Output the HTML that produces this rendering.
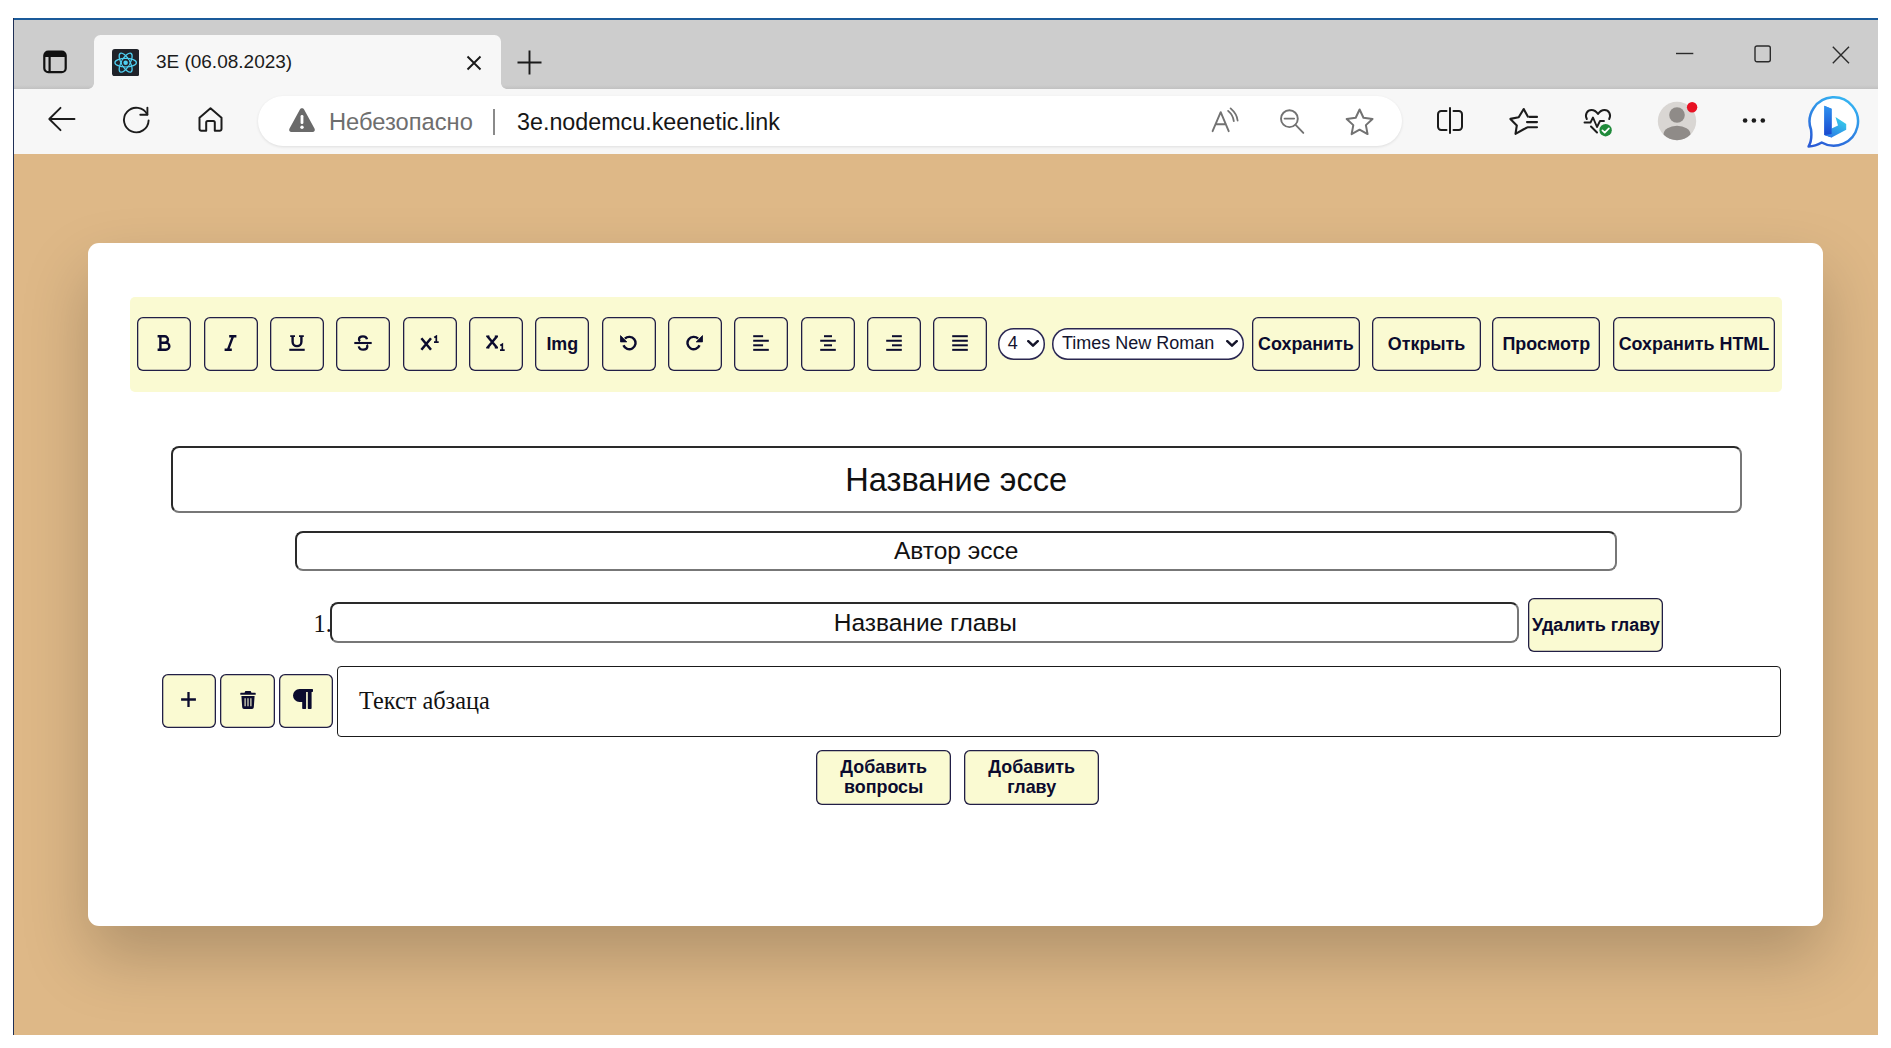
<!DOCTYPE html>
<html lang="ru">
<head>
<meta charset="utf-8">
<title>3E (06.08.2023)</title>
<style>
*{box-sizing:border-box;margin:0;padding:0}
html,body{width:1891px;height:1048px;overflow:hidden;background:#fff;font-family:"Liberation Sans",sans-serif;}
#win{position:absolute;left:13px;top:18px;width:1865px;height:1017px;overflow:hidden;background:#deb887;border-left:1px solid #1f2f55;}
#win:before{content:"";position:absolute;left:0;top:0;width:100%;height:2px;background:#1a5a9a;z-index:50}
.abs{position:absolute}
/* ---------- browser chrome ---------- */
#tabstrip{position:absolute;left:0;top:0;width:100%;height:70.7px;background:linear-gradient(#cdcdcd 67px,#c2c2c2 70.7px)}
#tab{position:absolute;left:79.6px;top:16.6px;width:407.5px;height:56px;background:#f7f7f7;border-radius:6.5px 6.5px 0 0}
#tab:before,#tab:after{content:"";position:absolute;bottom:1.9px;width:6px;height:6px;background:radial-gradient(circle at 0 0,rgba(0,0,0,0) 5.5px,#f7f7f7 6.2px)}
#tab:before{left:-6px}
#tab:after{right:-6px;transform:scaleX(-1)}
#navbar{position:absolute;left:0;top:70.5px;width:100%;height:65px;background:#f7f7f7}
#pill{position:absolute;left:243.5px;top:7.8px;width:1144.5px;height:50px;border-radius:25px;background:#fff;box-shadow:0 1px 3px rgba(0,0,0,.10)}
.ctext{position:absolute;white-space:nowrap;transform-origin:0 50%}
/* ---------- page ---------- */
#page{position:absolute;left:0;top:135.5px;width:1864px;height:881.5px;background:#deb887;overflow:hidden}
#card{position:absolute;left:74.3px;top:89.1px;width:1734.5px;height:683.9px;background:#fff;border-radius:11px;box-shadow:0 31px 66px rgba(0,0,0,.21)}
#tb{position:absolute;left:41.5px;top:54.9px;width:1652.6px;height:94.2px;background:#fafad2;border-radius:5px}
.b{position:absolute;top:19.7px;height:54px;width:54px;border:none;box-shadow:inset 0 0 0 1.3px #211e46;border-radius:6px;background:#fafad2;color:#0b0b2e;display:flex;align-items:center;justify-content:center;font-weight:700;font-size:17.9px;white-space:nowrap}
.b svg{display:block}
.ic{padding-bottom:1.8px}
.sel{position:absolute;top:30.8px;height:31.4px;border:none;box-shadow:inset 0 0 0 1.500px #2a2750;border-radius:15.600px;background:#fff;color:#14142e;font-size:18px;line-height:30.3px;padding-left:10px}
.inp{position:absolute;border:2px solid #2a2a2a;border-right-color:#777;border-bottom-color:#777;border-radius:8px;background:#fff;text-align:center;color:#111;white-space:nowrap}
</style>
</head>
<body>
<div id="win">
  <div id="tabstrip">
    <!-- tab actions icon -->
    <svg class="abs" style="left:28.5px;top:32px" width="24" height="24" viewBox="0 0 24 24"><rect x="1.3" y="1.6" width="21.4" height="20.6" rx="4" fill="none" stroke="#111" stroke-width="2.2"/><path d="M1.5 5.5a4 4 0 0 1 4-4h13a4 4 0 0 1 4 4v1.6h-21z" fill="#111"/><path d="M6.6 6v16" stroke="#111" stroke-width="2.2"/></svg>
    <div id="tab">
      <!-- favicon -->
      <svg class="abs" style="left:18.300px;top:14px" width="27.300" height="27.300" viewBox="0 0 28 28"><rect width="28" height="28" rx="3" fill="#20232a"/><g fill="none" stroke="#4fd0f2" stroke-width="1.300"><ellipse cx="14" cy="14" rx="11" ry="4.3"/><ellipse cx="14" cy="14" rx="11" ry="4.3" transform="rotate(60 14 14)"/><ellipse cx="14" cy="14" rx="11" ry="4.3" transform="rotate(120 14 14)"/></g><circle cx="14" cy="14" r="3.700" fill="#20232a"/><circle cx="14" cy="14" r="2.300" fill="#4fd0f2"/></svg>
      <div class="ctext" style="left:62.300px;top:16.600px;font-size:19px;line-height:22px;color:#1b1b1b">3E (06.08.2023)</div>
      <svg class="abs" style="left:372px;top:20px" width="16" height="16" viewBox="0 0 16 16"><path d="M1.5 1.5l13 13M14.500 1.5l-13 13" stroke="#1a1a1a" stroke-width="1.9" fill="none"/></svg>
    </div>
    <!-- new tab plus -->
    <svg class="abs" style="left:503px;top:31.500px" width="25" height="25" viewBox="0 0 25 25"><path d="M12.5 0.500v24M0.500 12.5h24" stroke="#1a1a1a" stroke-width="1.9" fill="none"/></svg>
    <!-- window controls -->
    <svg class="abs" style="left:1662px;top:33.800px" width="18" height="3" viewBox="0 0 18 3"><path d="M0 1.500h17.300" stroke="#2b2b2b" stroke-width="1.400"/></svg>
    <svg class="abs" style="left:1739.700px;top:27.200px" width="18" height="18" viewBox="0 0 18 18"><rect x="1" y="1" width="15.300" height="15.800" rx="2" fill="none" stroke="#2b2b2b" stroke-width="1.400"/></svg>
    <svg class="abs" style="left:1817.500px;top:27.800px" width="18" height="18" viewBox="0 0 18 18"><path d="M0.800 0.800l16.200 16.400M17 0.800l-16.200 16.400" stroke="#2b2b2b" stroke-width="1.400" fill="none"/></svg>
  </div>
  <div id="navbar">
    <!-- back -->
    <svg class="abs" style="left:33px;top:17.800px" width="29" height="26" viewBox="0 0 29 26"><path d="M27.500 13H2.500M13.500 1.800L2.300 13l11.200 11.200" fill="none" stroke="#1c1c1c" stroke-width="1.9" stroke-linecap="round" stroke-linejoin="round"/></svg>
    <!-- reload -->
    <svg class="abs" style="left:107px;top:16px" width="30" height="30" viewBox="0 0 30 30"><path d="M26.300 9.500A12.300 12.300 0 1 0 27.600 15.500" fill="none" stroke="#1c1c1c" stroke-width="1.900" stroke-linecap="round"/><path d="M26.400 2.600v7.100h-7.100" fill="none" stroke="#1c1c1c" stroke-width="1.900" stroke-linecap="round" stroke-linejoin="round"/></svg>
    <!-- home -->
    <svg class="abs" style="left:183px;top:17px" width="27" height="27" viewBox="0 0 27 27"><path d="M2.500 11.800L13.500 2.200l11 9.600V23a1.800 1.800 0 0 1-1.800 1.800h-4.900v-8.300a1.500 1.500 0 0 0-1.500-1.500h-5.600a1.500 1.500 0 0 0-1.500 1.500v8.300H4.300A1.800 1.800 0 0 1 2.500 23z" fill="none" stroke="#1c1c1c" stroke-width="2" stroke-linejoin="round"/></svg>
    <div id="pill">
      <!-- warning -->
      <svg class="abs" style="left:30px;top:11px" width="28" height="26" viewBox="0 0 28 26"><path d="M14 1.200c.9 0 1.700.5 2.100 1.300l10.500 19.300c.8 1.500-.3 3.300-2 3.300H3.400c-1.700 0-2.800-1.800-2-3.300L11.900 2.500c.4-.8 1.200-1.300 2.100-1.300z" fill="#6a6a6a"/><rect x="12.600" y="8" width="2.800" height="9" rx="1.200" fill="#fff"/><circle cx="14" cy="20.300" r="1.700" fill="#fff"/></svg>
      <div class="ctext" style="left:71.500px;top:12.200px;font-size:23.700px;line-height:28px;color:#6e6e6e">Небезопасно</div>
      <div class="abs" style="left:235.500px;top:13px;width:1.500px;height:25.500px;background:#8a8a8a"></div>
      <div class="ctext" style="left:259.500px;top:12.100px;font-size:23.300px;line-height:28px;color:#161616">3e.nodemcu.keenetic.link</div>
      <!-- read aloud -->
      <svg class="abs" style="left:952.500px;top:9.700px" width="30" height="30" viewBox="0 0 30 30"><path d="M2.600 25.200L10.700 6.200L18.700 25.200M5.600 18.300H15.900" fill="none" stroke="#727272" stroke-width="1.900" stroke-linecap="round" stroke-linejoin="round"/><path d="M18.100 4.900Q23 9 23.800 15.100M20.600 2.400Q27 8 27.600 14.500" fill="none" stroke="#727272" stroke-width="1.800" stroke-linecap="round"/></svg>
      <!-- zoom out -->
      <svg class="abs" style="left:1020.500px;top:10.700px" width="28" height="28" viewBox="0 0 28 28"><circle cx="11.400" cy="11.700" r="8.400" fill="none" stroke="#727272" stroke-width="1.900"/><path d="M6.600 11.600H16.100M17.600 17.900L25.300 25.900" fill="none" stroke="#727272" stroke-width="1.900" stroke-linecap="round"/></svg>
      <!-- star -->
      <svg class="abs" style="left:1086.500px;top:9.700px" width="32" height="32" viewBox="0 0 32 32"><path d="M15.60 3.50L19.48 11.76L28.53 12.90L21.88 19.14L23.59 28.10L15.60 23.70L7.61 28.10L9.32 19.14L2.67 12.90L11.72 11.76Z" fill="none" stroke="#727272" stroke-width="2" stroke-linejoin="round"/></svg>
    </div>
    <!-- split screen -->
    <svg class="abs" style="left:1421.800px;top:18.800px" width="28" height="27" viewBox="0 0 28 27"><path d="M10.500 4H5.200A3.200 3.200 0 0 0 2 7.200v12.600A3.200 3.200 0 0 0 5.200 23h5.300M17.500 4h5.300A3.200 3.200 0 0 1 26 7.200v12.600a3.200 3.200 0 0 1-3.200 3.200h-5.300M14 1v25" fill="none" stroke="#1c1c1c" stroke-width="2" stroke-linecap="round"/></svg>
    <!-- favorites -->
    <svg class="abs" style="left:1494px;top:17.500px" width="32" height="30" viewBox="0 0 32 30"><path d="M18.500 21.800L15.700 23.300L7.500 27.800L8.800 19.500L2.400 12.900L10.700 11.300L15.700 3L19.800 10.600" fill="none" stroke="#1c1c1c" stroke-width="2.100" stroke-linejoin="round" stroke-linecap="round"/><path d="M21.500 10.900H29M19 16.100H29M19.600 21.200H29" stroke="#1c1c1c" stroke-width="2.100" stroke-linecap="round"/></svg>
    <!-- health heart -->
    <svg class="abs" style="left:1569.200px;top:18.800px" width="32" height="30" viewBox="0 0 32 30"><path d="M3.800 12C1.500 7.500 4.300 3 8.500 3c3 0 5 1.800 6.500 4 1.500-2.200 3.500-4 6.500-4 4.200 0 7 4.500 4.700 9M8 19.500l6 6" fill="none" stroke="#1c1c1c" stroke-width="2" stroke-linecap="round" stroke-linejoin="round"/><path d="M1.500 15.500h6l2.500-5 4 9.500 3-6h4" fill="none" stroke="#1c1c1c" stroke-width="1.900" stroke-linecap="round" stroke-linejoin="round"/><circle cx="22.600" cy="23.200" r="6.200" fill="#1f8a3a"/><path d="M19.400 23.400l2.300 2.300 4.200-4.400" fill="none" stroke="#fff" stroke-width="1.700" stroke-linecap="round" stroke-linejoin="round"/></svg>
    <!-- profile -->
    <svg class="abs" style="left:1641.500px;top:10.700px" width="46" height="46" viewBox="0 0 46 46"><defs><clipPath id="pc"><circle cx="21" cy="22" r="19.200"/></clipPath></defs><circle cx="21" cy="22" r="19.200" fill="#d9d6d3"/><g clip-path="url(#pc)" fill="#8f8b88"><circle cx="21" cy="16" r="7.800"/><ellipse cx="21" cy="35.500" rx="13.500" ry="8.800"/></g><circle cx="36.100" cy="8.200" r="5.200" fill="#e81123"/></svg>
    <!-- dots -->
    <svg class="abs" style="left:1728px;top:28.400px" width="26" height="7" viewBox="0 0 26 7"><circle cx="3.100" cy="3.500" r="2.300" fill="#1c1c1c"/><circle cx="11.900" cy="3.500" r="2.300" fill="#1c1c1c"/><circle cx="20.800" cy="3.500" r="2.300" fill="#1c1c1c"/></svg>
    <!-- bing -->
    <svg class="abs" style="left:1793.200px;top:7.500px" width="54" height="54" viewBox="0 0 54 54"><defs><linearGradient id="bg1" x1="0.700" y1="0" x2="0.200" y2="1"><stop offset="0" stop-color="#35b4f2"/><stop offset="1" stop-color="#2a5bd6"/></linearGradient><linearGradient id="bg2" x1="0" y1="0" x2="0" y2="1"><stop offset="0" stop-color="#2f93f0"/><stop offset="1" stop-color="#1a49cf"/></linearGradient><linearGradient id="bg3" x1="0.800" y1="0" x2="0.200" y2="1"><stop offset="0" stop-color="#38d2ea"/><stop offset="1" stop-color="#2a78e6"/></linearGradient></defs><path d="M4.060 33.780A24.200 24.200 0 1 1 14.700 46.460Q8.500 50.300 1.600 50.400Q5.300 44.500 4.060 33.780Z" fill="#fff" stroke="url(#bg1)" stroke-width="2.500" stroke-linejoin="round"/><path d="M17.300 9.700L24.600 12.800V41.400L17.300 38.900Z" fill="url(#bg2)"/><path d="M28.500 21.100L39.200 28.100V33.800L24.600 41.400L17.300 38.900L24.600 32.500L31 29.600Z" fill="url(#bg3)"/><path d="M17.300 9.700L24.600 12.800V38L17.300 38.900Z" fill="url(#bg2)"/></svg>
  </div>
  <div id="page">
    <div id="card">
      <div id="tb">
        <div class="b ic" style="left:7.40px"><svg width="14" height="16" viewBox="0 0 14 16"><path d="M0.600 1.300h7.100a3.250 3.250 0 0 1 0 6.500H3.600M3.600 7.800h5.300a3.450 3.450 0 0 1 0 6.900H0.600M3.400 1.300v13.400" fill="none" stroke="#0b0b2e" stroke-width="2.400" stroke-linejoin="round"/></svg></div>
        <div class="b ic" style="left:73.75px"><svg width="13" height="16" viewBox="0 0 13 16"><path d="M5.200 1.300h7.200M0.600 14.700h7.200M9 1.300L4 14.700" fill="none" stroke="#0b0b2e" stroke-width="2.400"/></svg></div>
        <div class="b ic" style="left:140.10px"><svg width="16" height="16" viewBox="0 0 16 16"><path d="M3.600 0.900v5.800a4.400 4.400 0 0 0 8.800 0V0.900" fill="none" stroke="#0b0b2e" stroke-width="2.400"/><path d="M1.200 1.100h4.800M10 1.100h4.800" stroke="#0b0b2e" stroke-width="1.900"/><path d="M0.300 14.800h15.400" stroke="#0b0b2e" stroke-width="2.100"/></svg></div>
        <div class="b ic" style="left:206.45px"><svg width="18" height="16" viewBox="0 0 18 16"><path d="M13 4.300c-.3-1.900-1.800-3-4-3-2.400 0-4 1.100-4 2.900 0 .9.400 1.600 1.100 2.100M4.800 11.400c.3 2.100 1.900 3.300 4.400 3.300s4.100-1.200 4.100-3.100c0-.7-.2-1.300-.6-1.700" fill="none" stroke="#0b0b2e" stroke-width="2.300"/><path d="M0.300 8h17.400" stroke="#0b0b2e" stroke-width="2.100"/></svg></div>
        <div class="b ic" style="left:272.80px"><svg width="19" height="16" viewBox="0 0 19 16"><path d="M1.400 3.200l9.600 11.600M11 3.200L1.400 14.800" stroke="#0b0b2e" stroke-width="2.500"/><path d="M14.200 2.400l2.100-1.200v6M14 7.200h4.700" fill="none" stroke="#0b0b2e" stroke-width="1.700"/></svg></div>
        <div class="b ic" style="left:339.15px"><svg width="19" height="16" viewBox="0 0 19 16"><path d="M1.400 1.200l9.600 11.600M11 1.200L1.400 12.800" stroke="#0b0b2e" stroke-width="2.500"/><path d="M0.200 1.200h3.200M8.800 1.200h3.200M0.200 12.800h3.200M8.800 12.800h3.200" stroke="#0b0b2e" stroke-width="1.600"/><path d="M14.200 10.400l2.100-1.200v6M14 15.200h4.700" fill="none" stroke="#0b0b2e" stroke-width="1.700"/></svg></div>
        <div class="b" style="left:405.50px;padding-top:0.500px">Img</div>
        <div class="b ic" style="left:471.85px"><svg width="17" height="16" viewBox="0 0 17 16"><path d="M4.900 3.700A6.200 6.200 0 1 1 3.500 10.300" fill="none" stroke="#0b0b2e" stroke-width="2.400"/><path d="M0.500 0.600v6.300h6.300z" fill="#0b0b2e" stroke="#0b0b2e" stroke-width="0.800" stroke-linejoin="round"/></svg></div>
        <div class="b ic" style="left:538.20px"><svg width="17" height="16" viewBox="0 0 17 16"><path d="M12.100 3.700A6.200 6.200 0 1 0 13.500 10.300" fill="none" stroke="#0b0b2e" stroke-width="2.400"/><path d="M16.500 0.600v6.300h-6.300z" fill="#0b0b2e" stroke="#0b0b2e" stroke-width="0.800" stroke-linejoin="round"/></svg></div>
        <div class="b ic" style="left:604.55px"><svg width="16" height="16" viewBox="0 0 16 16"><g stroke="#0b0b2e" stroke-width="2"><path d="M0.2 1.20h9.9"/><path d="M0.2 5.75h15.6"/><path d="M0.2 10.30h9.9"/><path d="M0.2 14.85h15.6"/></g></svg></div>
        <div class="b ic" style="left:670.90px"><svg width="16" height="16" viewBox="0 0 16 16"><g stroke="#0b0b2e" stroke-width="2"><path d="M4 1.20h8.0"/><path d="M0.2 5.75h15.6"/><path d="M4 10.30h8.0"/><path d="M0.2 14.85h15.6"/></g></svg></div>
        <div class="b ic" style="left:737.25px"><svg width="16" height="16" viewBox="0 0 16 16"><g stroke="#0b0b2e" stroke-width="2"><path d="M6 1.20h9.8"/><path d="M0.2 5.75h15.6"/><path d="M6 10.30h9.8"/><path d="M0.2 14.85h15.6"/></g></svg></div>
        <div class="b ic" style="left:803.60px"><svg width="16" height="16" viewBox="0 0 16 16"><g stroke="#0b0b2e" stroke-width="2"><path d="M0.2 1.20h15.6"/><path d="M0.2 5.75h15.6"/><path d="M0.2 10.30h15.6"/><path d="M0.2 14.85h15.6"/></g></svg></div>
        <div class="sel" style="left:868px;width:47.700px">4<svg class="abs" style="right:6.300px;top:12.200px" width="12" height="7" viewBox="0 0 12 7"><path d="M1.300 1.200L6 5.700L10.700 1.200" fill="none" stroke="#14142a" stroke-width="2.500" stroke-linecap="round" stroke-linejoin="round"/></svg></div>
        <div class="sel" style="left:922.200px;width:192.200px">Times New Roman<svg class="abs" style="right:6.300px;top:12.200px" width="12" height="7" viewBox="0 0 12 7"><path d="M1.300 1.200L6 5.700L10.700 1.200" fill="none" stroke="#14142a" stroke-width="2.500" stroke-linecap="round" stroke-linejoin="round"/></svg></div>
        <div class="b" style="left:1122.2px;width:108px">Сохранить</div>
        <div class="b" style="left:1242.7px;width:108.2px">Открыть</div>
        <div class="b" style="left:1362.5px;width:108px">Просмотр</div>
        <div class="b" style="left:1482.9px;width:162.5px">Сохранить HTML</div>
        </div>
      <div class="inp" style="left:82.5px;top:203.7px;width:1570.8px;height:66.8px;font-size:32.6px;line-height:64.6px">Название эссе</div>
      <div class="inp" style="left:206.5px;top:288.2px;width:1322.7px;height:40.5px;font-size:24.5px;line-height:36.2px">Автор эссе</div>
      <div class="abs" style="left:225.2px;top:367px;font-family:'Liberation Serif',serif;font-size:24.3px;line-height:28px;color:#111">1.</div>
      <div class="inp" style="left:241.6px;top:359.8px;width:1188.9px;height:40.6px;font-size:24.5px;line-height:37.8px;padding-left:2px">Название главы</div>
      <div class="b" style="left:1440px;top:355.600px;width:135.200px;height:54px;font-size:18px">Удалить главу</div>
      <div class="b ic" style="left:73.5px;top:431.1px;width:54px;height:54px"><svg width="15" height="15" viewBox="0 0 15 15"><path d="M7.500 0.100v14.800M0.100 7.500h14.800" stroke="#0b0b2e" stroke-width="2.300"/></svg></div>
      <div class="b ic" style="left:132.1px;top:431.1px;width:54.3px;height:54px"><svg width="16" height="18" viewBox="0 0 16 18"><path d="M5.400 0h5.200l.9 1.700h3.700a.5.500 0 0 1 .5.500v1.600H0.300V2.200a.5.500 0 0 1 .5-.5h3.700z" fill="#0b0b2e"/><path d="M1.400 5h13.200l-.8 11.300a1.800 1.800 0 0 1-1.800 1.700H4a1.800 1.800 0 0 1-1.800-1.700z" fill="#0b0b2e"/><path d="M5.100 7.300v8M8 7.300v8M10.900 7.300v8" stroke="#fafad2" stroke-width="1.100"/></svg></div>
      <div class="b ic" style="left:190.8px;top:431.1px;width:53.7px;height:54px;padding-right:5.500px;padding-bottom:3.500px"><svg width="20" height="20" viewBox="0 0 20 20"><path d="M6.500 0H19.300a.7.700 0 0 1 .7.700V2.300a.7.700 0 0 1-.7.700H18.600V19.300a.7.700 0 0 1-.7.700H15.500a.7.700 0 0 1-.7-.7V3H13.100V19.300a.7.700 0 0 1-.7.700H9.900a.7.700 0 0 1-.7-.7V13H6.500A6.500 6.500 0 0 1 6.500 0z" fill="#0b0b2e"/></svg></div>
      <div class="abs" style="left:248.3px;top:423.8px;width:1444.5px;height:70.8px;border:1.4px solid #1a1a1a;border-radius:4px;background:#fff"></div>
      <div class="abs" style="left:270.8px;top:443.1px;font-family:'Liberation Serif',serif;font-size:24.3px;line-height:30px;color:#111;white-space:nowrap">Текст абзаца</div>
      <div class="b" style="left:727.600px;top:507.600px;width:135.600px;height:54.400px;font-size:17.9px;line-height:20.5px;text-align:center">Добавить<br>вопросы</div>
      <div class="b" style="left:875.600px;top:507.600px;width:135.600px;height:54.400px;font-size:17.9px;line-height:20.5px;text-align:center">Добавить<br>главу</div>
    </div>
  </div>
</div>
</body>
</html>
